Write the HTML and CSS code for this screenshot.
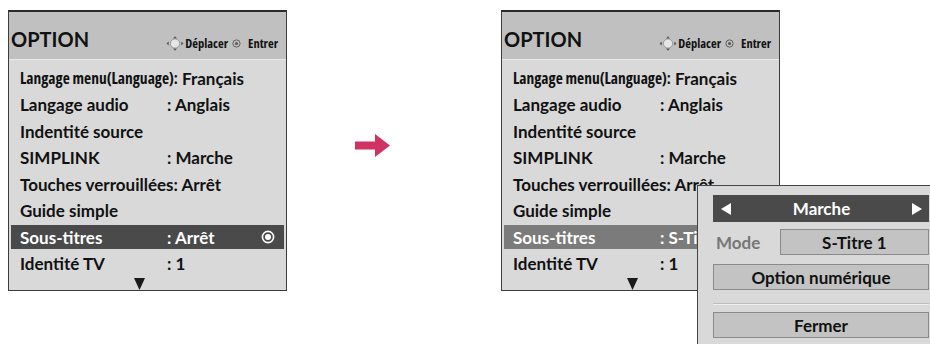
FILE: index.html
```html
<!DOCTYPE html>
<html lang="fr">
<head>
<meta charset="utf-8">
<link rel="stylesheet" href="styles.css">
</head>
<body>
<div class="screen">

	<div class="panel">
		<div class="panel-head">
			<span class="panel-title">OPTION</span>
			<span class="hint">
				<svg class="hint-move" width="18" height="15" viewBox="0 0 18 15">
					<path d="M9 0.3 L11 2.4 L7 2.4 Z M9 14.7 L11 12.6 L7 12.6 Z M0.5 7.5 L2.7 5.5 L2.7 9.5 Z M17.5 7.5 L15.3 5.5 L15.3 9.5 Z" fill="#555"/>
					<circle cx="9" cy="7.5" r="4.6" fill="#E6E6E6" stroke="#8A8A8A" stroke-width="0.8"/>
				</svg>
				<span class="hint-text">Déplacer</span>
				<svg class="hint-ok" width="9" height="9" viewBox="0 0 9 9">
					<circle cx="4.5" cy="4.5" r="3.6" fill="none" stroke="#555" stroke-width="0.9"/>
					<circle cx="4.5" cy="4.5" r="1.5" fill="#555"/>
				</svg>
				<span class="hint-text">Entrer</span>
			</span>
		</div>
		<div class="panel-body">
			<div class="row"><span class="narrow">Langage menu(Language):</span>&nbsp;Français</div>
			<div class="row"><span class="label">Langage audio</span><span class="value">: Anglais</span></div>
			<div class="row"><span class="label">Indentité source</span></div>
			<div class="row"><span class="label">SIMPLINK</span><span class="value">: Marche</span></div>
			<div class="row">Touches verrouillées: Arrêt</div>
			<div class="row"><span class="label">Guide simple</span></div>
			<div class="row row-dark"><span class="label">Sous-titres</span><span class="value">: Arrêt</span>
				<svg class="select-mark" width="14" height="14" viewBox="0 0 14 14">
					<circle cx="7" cy="7" r="5.6" fill="none" stroke="#fff" stroke-width="1.6"/>
					<circle cx="7" cy="7" r="3" fill="#fff"/>
				</svg>
			</div>
			<div class="row"><span class="label">Identité TV</span><span class="value">: 1</span></div>
			<div class="more">
				<svg width="11" height="12" viewBox="0 0 11 12"><path d="M0 0 H11 L5.5 12 Z" fill="#1a1a1a"/></svg>
			</div>
		</div>
	</div>

	<div class="step-arrow">
		<svg width="35" height="23" viewBox="0 0 35 23">
			<path d="M0 7.5 H20 V0 L35 11.5 L20 23 V15.5 H0 Z" fill="#cf3363"/>
		</svg>
	</div>

	<div class="panel">
		<div class="panel-head">
			<span class="panel-title">OPTION</span>
			<span class="hint">
				<svg class="hint-move" width="18" height="15" viewBox="0 0 18 15">
					<path d="M9 0.3 L11 2.4 L7 2.4 Z M9 14.7 L11 12.6 L7 12.6 Z M0.5 7.5 L2.7 5.5 L2.7 9.5 Z M17.5 7.5 L15.3 5.5 L15.3 9.5 Z" fill="#555"/>
					<circle cx="9" cy="7.5" r="4.6" fill="#E6E6E6" stroke="#8A8A8A" stroke-width="0.8"/>
				</svg>
				<span class="hint-text">Déplacer</span>
				<svg class="hint-ok" width="9" height="9" viewBox="0 0 9 9">
					<circle cx="4.5" cy="4.5" r="3.6" fill="none" stroke="#555" stroke-width="0.9"/>
					<circle cx="4.5" cy="4.5" r="1.5" fill="#555"/>
				</svg>
				<span class="hint-text">Entrer</span>
			</span>
		</div>
		<div class="panel-body">
			<div class="row"><span class="narrow">Langage menu(Language):</span>&nbsp;Français</div>
			<div class="row"><span class="label">Langage audio</span><span class="value">: Anglais</span></div>
			<div class="row"><span class="label">Indentité source</span></div>
			<div class="row"><span class="label">SIMPLINK</span><span class="value">: Marche</span></div>
			<div class="row">Touches verrouillées: Arrêt</div>
			<div class="row"><span class="label">Guide simple</span></div>
			<div class="row row-grey"><span class="label">Sous-titres</span><span class="value">: S-Titre 1</span></div>
			<div class="row"><span class="label">Identité TV</span><span class="value">: 1</span></div>
			<div class="more">
				<svg width="11" height="12" viewBox="0 0 11 12"><path d="M0 0 H11 L5.5 12 Z" fill="#1a1a1a"/></svg>
			</div>
		</div>

		<div class="popup">
			<div class="popup-bar">
				<svg width="10" height="12" viewBox="0 0 10 12"><path d="M0 6 L10 0 V12 Z" fill="#fff"/></svg>
				<span>Marche</span>
				<svg width="10" height="12" viewBox="0 0 10 12"><path d="M10 6 L0 0 V12 Z" fill="#fff"/></svg>
			</div>
			<div class="popup-mode">
				<span class="mode-label">Mode</span>
				<span class="box mode-box">S-Titre 1</span>
			</div>
			<div class="box wide-box">Option numérique</div>
			<div class="popup-sep"></div>
			<div class="box wide-box">Fermer</div>
		</div>
	</div>

</div>
</body>
</html>
```

FILE: styles.css
```css
body { margin: 0px; background: #FFFFFF; color: #111111;
       font-family: Lato, "Open Sans", Arial, sans-serif; font-weight: bold; }
.screen { display: flex; align-items: flex-start; width: 930px; height: 344px;
          box-sizing: border-box; padding-top: 10px; padding-left: 8px; overflow: hidden; }

.panel { position: relative; width: 279px; height: 281px; box-sizing: border-box;
         border: 1px solid #3c3c3c; border-top: 2px solid #2a2a2a; background: #D9D9D9; }
.panel-head { display: flex; align-items: center; justify-content: space-between; height: 47px;
              background: #C0C0C0; border-bottom: 1px solid #EAEAEA; padding-left: 2px; padding-right: 8px; }
.panel-title { font-size: 20px; padding-top: 6px; }
.hint { display: flex; align-items: center; padding-top: 15px;
        font-family: "Open Sans", sans-serif; font-stretch: 80%; font-size: 12.5px; }
.hint-move { margin-right: 1px; }
.hint-ok { margin-left: 4px; margin-right: 7px; }

.panel-body { padding-top: 6px; }
.row { display: flex; align-items: center; height: 24px; margin: 0px 2px 2.5px 2px; padding-left: 9px;
       font-size: 17px; white-space: nowrap; }
.label { width: 147px; }
.narrow { font-family: "Open Sans", sans-serif; font-stretch: 80%; font-size: 15.5px; }
.row-dark { background: #4A4A4A; color: #FFFFFF; }
.row-grey { background: #7B7B7B; color: #FFFFFF; }
.select-mark { margin-left: auto; margin-right: 9px; }
.more { display: flex; justify-content: center; padding-right: 16px; margin-top: 1px; }

.step-arrow { margin-left: 68px; margin-right: 111px; padding-top: 124px; }

.popup { position: absolute; left: 195px; top: 173px; width: 247px; height: 180px; box-sizing: border-box;
         background: #D9D9D9; border-left: 1px solid #444444; border-top: 1px solid #444444;
         padding: 9px 15px 0px 15px; }
.popup-bar { display: flex; align-items: center; justify-content: space-between; height: 27px;
             background: #4A4A4A; color: #FFFFFF; font-size: 17px; padding: 0px 7px 0px 8px; }
.popup-mode { display: flex; align-items: center; margin-top: 7px; }
.mode-label { width: 64px; padding-left: 3px; color: #777777; font-size: 17px; }
.box { display: flex; align-items: center; justify-content: center; height: 24px;
       background: #C3C3C3; border: 1px solid #8A8A8A; font-size: 17px; }
.mode-box { width: 148px; }
.wide-box { margin-top: 9px; }
.popup-sep { height: 0px; border-top: 1px solid #BDBDBD; border-bottom: 1px solid #EEEEEE; margin-top: 13px; margin-bottom: -2px; }
```
